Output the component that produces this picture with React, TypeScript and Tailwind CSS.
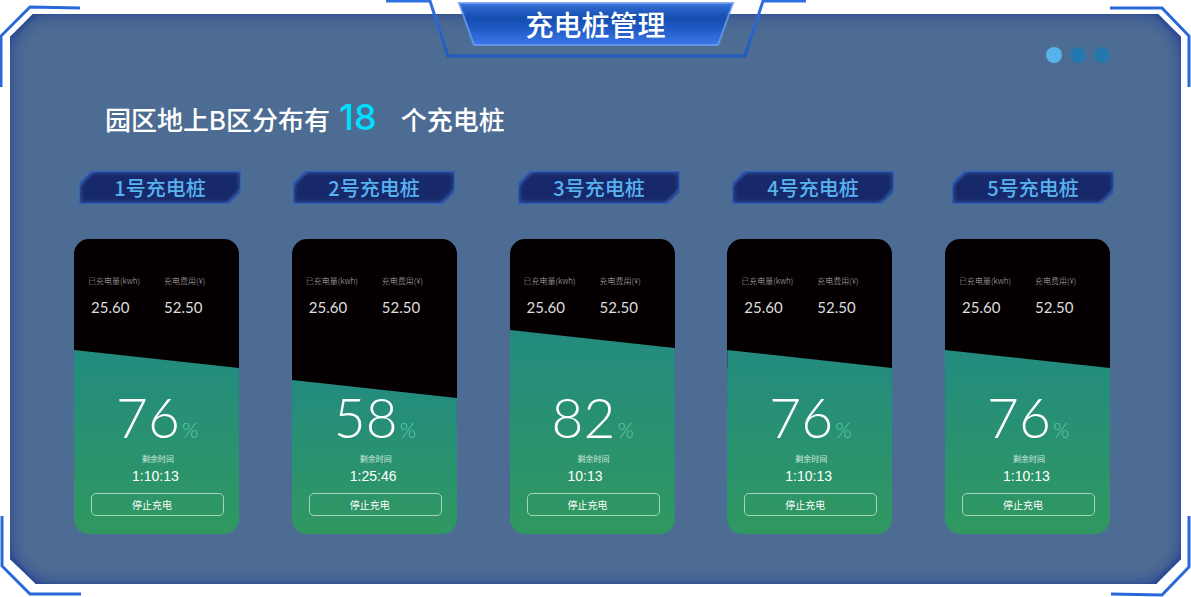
import React from 'react';

type Station = {
  name: string;
  energy: string;
  cost: string;
  percent: number;
  remaining: string;
  level: number;
};

const stations: Station[] = [
  { name: '1号充电桩', energy: '25.60', cost: '52.50', percent: 76, remaining: '1:10:13', level: 184 },
  { name: '2号充电桩', energy: '25.60', cost: '52.50', percent: 58, remaining: '1:25:46', level: 154 },
  { name: '3号充电桩', energy: '25.60', cost: '52.50', percent: 82, remaining: '10:13', level: 204 },
  { name: '4号充电桩', energy: '25.60', cost: '52.50', percent: 76, remaining: '1:10:13', level: 184 },
  { name: '5号充电桩', energy: '25.60', cost: '52.50', percent: 76, remaining: '1:10:13', level: 184 },
];

function Corner({ points, className }: { points: string; className: string }) {
  return (
    <svg className={`absolute h-[90px] w-[84px] ${className}`} viewBox="0 0 84 90" fill="none" aria-hidden="true">
      <polyline points={points} stroke="#2968d8" strokeWidth="3" />
    </svg>
  );
}

function Frame() {
  return (
    <div className="absolute inset-0" aria-hidden="true">
      <div className="absolute inset-x-2.5 top-3.5 bottom-[13px] bg-[#4d6c93] bg-[image:linear-gradient(135deg,#2b4794_16px,#3d5b9580_22px,transparent_34px),linear-gradient(225deg,#2b4794_16px,#3d5b9580_22px,transparent_34px),linear-gradient(45deg,#2b4794_18px,#3d5b9580_24px,transparent_34px),linear-gradient(315deg,#2b4794_18px,#3d5b9580_24px,transparent_34px)] shadow-[inset_0_0_18px_#2b4794,inset_0_0_2px_#22398c] [clip-path:polygon(23px_0,calc(100%_-_23px)_0,100%_23px,100%_calc(100%_-_25px),calc(100%_-_25px)_100%,26px_100%,0_calc(100%_-_25px),0_23px)]" />
      <Corner className="top-0 left-0" points="1,87 1,36 30,7 80,8" />
      <Corner className="top-0 right-0" points="3,8 55,8 82,36 82,87" />
      <Corner className="bottom-0 left-0" points="2,9 2,59 30,87 81,87" />
      <Corner className="right-0 bottom-0" points="4,87 55,88 82,60 82,9" />
    </div>
  );
}

function TitleBanner() {
  return (
    <header className="relative mx-auto flex h-[60px] w-[420px] justify-center">
      <svg className="absolute inset-0 h-full w-full" viewBox="0 0 420 60" fill="none" aria-hidden="true">
        <defs>
          <linearGradient id="banner" x1="0" y1="0" x2="0" y2="1">
            <stop offset="0" stopColor="#3f79dc" />
            <stop offset="0.14" stopColor="#2862c8" />
            <stop offset="0.36" stopColor="#144eaf" />
            <stop offset="0.6" stopColor="#2059c4" />
            <stop offset="1" stopColor="#3a78ea" />
          </linearGradient>
          <linearGradient id="rail" x1="0" y1="0" x2="0" y2="1">
            <stop offset="0" stopColor="#2f70e2" />
            <stop offset="1" stopColor="#1f5abc" />
          </linearGradient>
        </defs>
        <polyline points="0,1 44,1 62,56 359,56 377,1 420,1" stroke="url(#rail)" strokeWidth="3" />
        <polygon points="73,3 347,3 332,45 88,45" fill="url(#banner)" stroke="#6d9cf0" strokeOpacity="0.8" strokeWidth="2" />
      </svg>
      <h1 className="relative pt-1 text-[28px] leading-10 font-medium text-white">充电桩管理</h1>
    </header>
  );
}

function Badge({ name }: { name: string }) {
  return (
    <h2 className="w-[162px] bg-[#2a5fc4] p-px text-[20px] leading-[31px] font-medium text-[#58b2ee] [clip-path:polygon(12px_0,100%_0,100%_21px,calc(100%_-_12px)_100%,0_100%,0_12px)]">
      <span className="block bg-[#17296a] bg-[image:linear-gradient(135deg,#3457a0_8px,transparent_12px),linear-gradient(315deg,#3457a0_8px,transparent_12px)] text-center shadow-[inset_0_0_5px_#4164aa] [clip-path:polygon(12px_0,100%_0,100%_20px,calc(100%_-_12px)_100%,0_100%,0_12px)]">
        {name}
      </span>
    </h2>
  );
}

function StationCard({ station }: { station: Station }) {
  return (
    <article className="relative w-[165px] overflow-hidden rounded-[15px] pb-[18px] text-white" aria-label={station.name}>
      <div className="absolute inset-x-0 top-0 bg-[#040001]" style={{ bottom: station.level - 18 }} />
      <div
        className="absolute inset-x-0 bottom-0 bg-linear-to-b from-[#238b7f] to-[#30985f] [clip-path:polygon(0_0,100%_18px,100%_100%,0_100%)]"
        style={{ height: station.level }}
      />
      <div className="relative">
        <dl className="grid grid-cols-[76px_1fr] pt-9 pl-3.5">
          <div>
            <dt className="text-[8px] leading-3 font-light text-[#b4b4b4]">已充电量(kwh)</dt>
            <dd className="mt-2.5 pl-[3px] font-[Lato] text-[15px] leading-5 text-[#dedede]">{station.energy}</dd>
          </div>
          <div>
            <dt className="text-[8px] leading-3 font-light text-[#b4b4b4]">充电费用(¥)</dt>
            <dd className="mt-2.5 font-[Lato] text-[15px] leading-5 text-[#dedede]">{station.cost}</dd>
          </div>
        </dl>
        <p className="mt-[70px] flex items-baseline pl-[42px] font-[Lato] leading-[60px]">
          <span className="w-[66px] text-[55px] font-light">{station.percent}</span>
          <span className="text-[21px] leading-5 font-light text-[#5fcba8]">%</span>
        </p>
        <p className="mt-1.5 pl-[68px] text-[8px] leading-3 text-[#d5ebe0]">剩余时间</p>
        <p className="mt-[3px] pl-[58px] font-['Liberation_Sans'] text-[14px] leading-4">{station.remaining}</p>
        <button
          type="button"
          className="mx-[17px] mt-[9px] block h-[23px] w-[133px] rounded-[5px] border border-[#a5d5bb] pl-10 text-left text-[10px] leading-[21px]"
        >
          停止充电
        </button>
      </div>
    </article>
  );
}

export default function App() {
  return (
    <div className="relative min-h-screen bg-white pb-[63px] font-['Noto_Sans_CJK_SC',sans-serif]">
      <Frame />
      <div className="relative">
        <TitleBanner />
        <main className="pr-[81px] pl-[74px]">
          <nav className="-mt-[13px] flex justify-end gap-2" aria-label="分页">
            <button type="button" aria-label="1" className="size-4 rounded-full bg-[#58b2ec]" />
            <button type="button" aria-label="2" className="size-4 rounded-full bg-[#2378ae]" />
            <button type="button" aria-label="3" className="size-4 rounded-full bg-[#2378ae]" />
          </nav>
          <p className="mt-[34px] flex items-baseline pl-[31px] font-['Inter','Noto_Sans_CJK_SC',sans-serif] text-[26px] leading-10 font-medium text-white">
            园区地上B区分布有
            <strong className="mr-6 ml-[9px] text-[36px] font-medium text-[#00dfff]">18</strong>
            个充电桩
          </p>
          <div className="mt-[30px] -mr-1 grid grid-cols-[214fr_225fr_214fr_220fr_162fr] pl-[5px]">
            {stations.map((station) => (
              <Badge key={station.name} name={station.name} />
            ))}
          </div>
          <section className="mt-[35px] flex justify-between">
            {stations.map((station) => (
              <StationCard key={station.name} station={station} />
            ))}
          </section>
        </main>
      </div>
    </div>
  );
}
